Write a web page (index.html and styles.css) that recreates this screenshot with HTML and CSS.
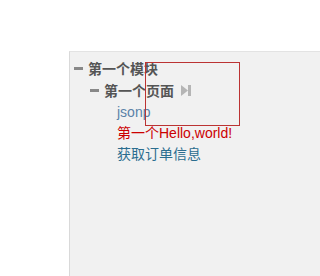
FILE: index.html
```html
<!DOCTYPE html>
<html lang="zh">
<head>
  <meta charset="UTF-8">
  <title>模块树</title>
  <link rel="stylesheet" href="styles.css">
</head>
<body>
  <div class="panel">
    <ul class="tree">
      <li>
        <div class="node module"><span class="minus"></span>第一个模块</div>
        <ul>
          <li>
            <div class="node page"><span class="minus"></span>第一个页面
              <svg class="run" width="10" height="11" viewBox="0 0 10 11"><path d="M0 0 L7 5.5 L0 11 Z" fill="#b5b5b5"/><rect x="7" y="0" width="3" height="11" fill="#b5b5b5"/></svg>
            </div>
            <ul class="items">
              <li><a class="item jsonp" href="#">jsonp</a></li>
              <li><a class="item hello" href="#">第一个Hello,world!</a></li>
              <li><a class="item order" href="#">获取订单信息</a></li>
            </ul>
          </li>
        </ul>
      </li>
    </ul>
    <div class="select-box"></div>
  </div>
</body>
</html>
```

FILE: styles.css
```css
html, body {
  margin: 0;
  height: 100%;
  background: #fff;
}

body {
  font-family: "Liberation Sans", Arial, "Noto Sans CJK SC", sans-serif;
  font-size: 14px;
  overflow: hidden;
}

.panel {
  position: relative;
  box-sizing: border-box;
  margin: 51px 0 0 69px;
  height: 225px;
  background: #f1f1f1;
  border-left: 1px solid #d9d9d9;
  border-top: 1px solid #e3e3e3;
  padding: 5px 0 0 4px;
}

.tree, .tree ul {
  list-style: none;
  margin: 0;
  padding: 0;
}

.tree ul {
  padding-left: 16px;
}

.node {
  display: flex;
  align-items: center;
  height: 22px;
  font-weight: bold;
  color: #555;
}

.minus {
  display: inline-block;
  width: 9px;
  height: 3px;
  background: #888;
  margin-right: 5px;
}

.run {
  margin-left: 7px;
}

.tree ul.items {
  padding: 1px 0 0 27px;
}

.item {
  display: block;
  height: 21px;
  line-height: 21px;
  text-decoration: none;
}

.jsonp { color: #5a82a8; }
.hello { color: #c00; }
.order { color: #2b6d8f; }

.select-box {
  position: absolute;
  left: 75px;
  top: 10px;
  width: 93px;
  height: 62px;
  border: 1px solid #b33;
}
```
